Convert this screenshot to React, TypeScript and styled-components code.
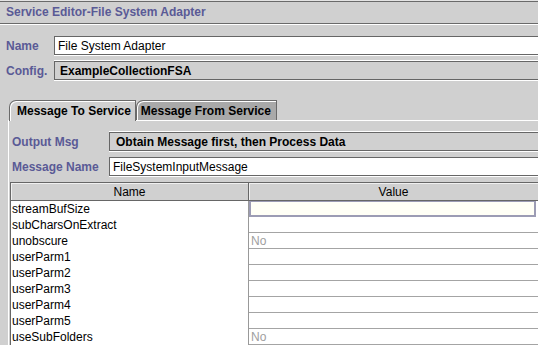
import React from "react";
import styled, { createGlobalStyle } from "styled-components";

const GlobalStyle = createGlobalStyle`
  html, body {
    margin: 0;
    padding: 0;
    background: #d0d0d0;
  }
  body {
    font-family: "Liberation Sans", Arial, sans-serif;
    font-size: 12px;
    color: #000;
  }
  * { box-sizing: border-box; }
`;

const Window = styled.div`
  width: 538px;
  height: 345px;
  overflow: hidden;
  background: #d0d0d0;
  display: flex;
  flex-direction: column;
`;

const TitleBar = styled.div`
  margin-top: 1px;
  height: 23px;
  border-top: 1px solid #6a6a6a;
  border-bottom: 1px solid #6a6a6a;
  box-shadow: 0 1px 0 #ffffff, 0 -1px 0 #e4e4e4;
  padding-left: 6px;
  line-height: 21px;
  font-weight: bold;
  font-size: 12px;
  color: #5a5a96;
  flex: none;
`;

const Form = styled.div`
  display: flex;
  flex-direction: column;
  gap: 6px;
  padding: 12px 0 0 6px;
  flex: none;
`;

const FieldRow = styled.div`
  display: flex;
  align-items: stretch;
  height: 19px;
`;

const Label = styled.div<{ $w: number; $pad?: number }>`
  width: ${(p) => p.$w}px;
  padding-left: ${(p) => p.$pad ?? 0}px;
  flex: none;
  display: flex;
  align-items: center;
  font-weight: bold;
  font-size: 12px;
  color: #5a5a96;
  white-space: nowrap;
`;

const Field = styled.div<{ $readonly?: boolean; $pad?: number }>`
  flex: 1;
  display: flex;
  align-items: center;
  padding-left: ${(p) => p.$pad ?? 3}px;
  background: ${(p) => (p.$readonly ? "#d0d0d0" : "#ffffff")};
  border-top: 1px solid #666666;
  border-left: 1px solid #666666;
  border-bottom: 1px solid #666666;
  box-shadow: ${(p) =>
    p.$readonly ? "0 -1px 0 #ffffff, 0 1px 0 #ffffff" : "0 1px 0 #ffffff"};
  font-size: 12px;
  font-weight: ${(p) => (p.$readonly ? "bold" : "normal")};
  white-space: nowrap;
  overflow: hidden;
`;

const TabArea = styled.div`
  margin-top: 20px;
  padding-left: 8px;
  display: flex;
  flex-direction: column;
  flex: 1;
  min-height: 0;
`;

const TabStrip = styled.div`
  display: flex;
  padding-left: 1px;
  height: 20px;
  flex: none;
  position: relative;
  z-index: 1;
`;

const Tab = styled.div<{ $selected?: boolean }>`
  height: ${(p) => (p.$selected ? "21px" : "20px")};
  padding: ${(p) => (p.$selected ? "0 4px 0 7px" : "0 5px 0 4px")};
  display: flex;
  align-items: center;
  font-weight: bold;
  font-size: 12px;
  background: ${(p) => (p.$selected ? "#d0d0d0" : "#a9a9a9")};
  border-top: 1px solid #6a6a6a;
  border-left: 1px solid #6a6a6a;
  border-right: 1px solid #6a6a6a;
  border-top-left-radius: 7px;
  box-shadow: inset 1px 1px 0 #ffffff;
  white-space: nowrap;
`;

const TabPanel = styled.div`
  border-top: 1px solid #ffffff;
  border-left: 1px solid #ffffff;
  padding: 11px 0 0 1px;
  display: flex;
  flex-direction: column;
  gap: 6px;
  flex: 1;
  min-height: 0;
`;

const TableWrap = styled.div`
  display: flex;
  flex-direction: column;
`;

const HeaderGrid = styled.div`
  display: grid;
  grid-template-columns: 238px 1fr;
  height: 19px;
  border-left: 1px solid #666666;
  border-top: 1px solid #666666;
`;

const HCell = styled.div<{ $first?: boolean }>`
  background: #d0d0d0;
  border-bottom: 1px solid #666666;
  border-right: ${(p) => (p.$first ? "1px solid #666666" : "none")};
  box-shadow: inset 1px 1px 0 #f0f0f0;
  display: flex;
  align-items: center;
  justify-content: center;
  font-size: 12px;
  color: #000;
`;

const BodyGrid = styled.div`
  display: grid;
  grid-template-columns: 238px 1fr;
  grid-auto-rows: 16px;
  border-left: 1px solid #666666;
  background: #ffffff;
`;

const NameCell = styled.div`
  border-right: 1px solid #999999;
  padding-left: 1px;
  display: flex;
  align-items: center;
  font-size: 12px;
  color: #000;
  white-space: nowrap;
`;

const ValueCell = styled.div<{ $editing?: boolean }>`
  border-bottom: 1px solid #a4a4a4;
  padding-left: 2px;
  display: flex;
  align-items: center;
  font-size: 12px;
  color: #a0a0a0;
  background: ${(p) => (p.$editing ? "#fffff6" : "#ffffff")};
  ${(p) =>
    p.$editing
      ? `border: 2px solid #9c9cb4; border-top-width: 1px; margin-right: 2px;`
      : ""}
`;

const rows: { name: string; value: string }[] = [
  { name: "streamBufSize", value: "" },
  { name: "subCharsOnExtract", value: "" },
  { name: "unobscure", value: "No" },
  { name: "userParm1", value: "" },
  { name: "userParm2", value: "" },
  { name: "userParm3", value: "" },
  { name: "userParm4", value: "" },
  { name: "userParm5", value: "" },
  { name: "useSubFolders", value: "No" },
];

export default function App() {
  return (
    <>
      <GlobalStyle />
      <Window>
        <TitleBar>Service Editor-File System Adapter</TitleBar>
        <Form>
          <FieldRow>
            <Label $w={48}>Name</Label>
            <Field>File System Adapter</Field>
          </FieldRow>
          <FieldRow>
            <Label $w={48}>Config.</Label>
            <Field $readonly $pad={5}>ExampleCollectionFSA</Field>
          </FieldRow>
        </Form>
        <TabArea>
          <TabStrip>
            <Tab $selected>Message To Service</Tab>
            <Tab>Message From Service</Tab>
          </TabStrip>
          <TabPanel>
            <FieldRow>
              <Label $w={99} $pad={2}>Output Msg</Label>
              <Field $readonly $pad={6}>Obtain Message first, then Process Data</Field>
            </FieldRow>
            <FieldRow>
              <Label $w={99} $pad={2}>Message Name</Label>
              <Field>FileSystemInputMessage</Field>
            </FieldRow>
            <TableWrap>
              <HeaderGrid>
                <HCell $first>Name</HCell>
                <HCell>Value</HCell>
              </HeaderGrid>
              <BodyGrid>
                {rows.map((r, i) => (
                  <React.Fragment key={r.name}>
                    <NameCell>{r.name}</NameCell>
                    <ValueCell $editing={i === 0}>{r.value}</ValueCell>
                  </React.Fragment>
                ))}
              </BodyGrid>
            </TableWrap>
          </TabPanel>
        </TabArea>
      </Window>
    </>
  );
}
